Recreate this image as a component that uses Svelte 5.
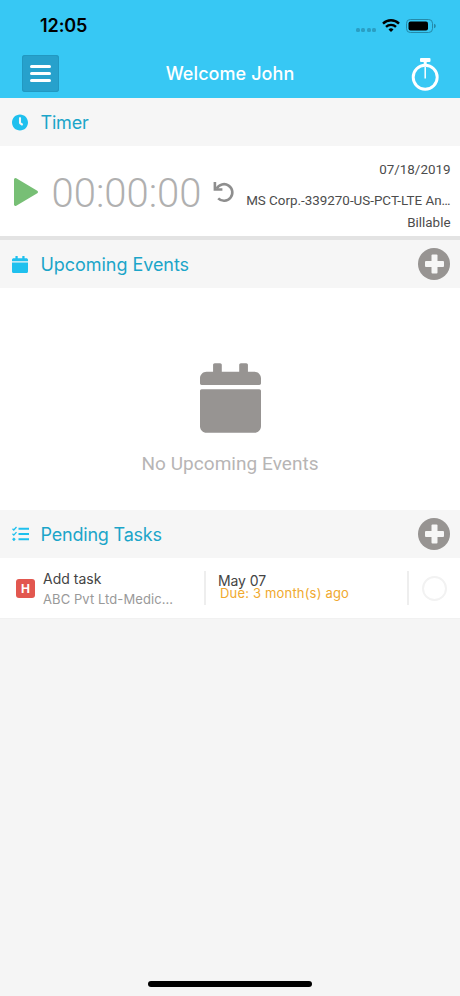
<script>
	let time = "12:05";
	let user = "John";
	let timer = {
		elapsed: "00:00:00",
		date: "07/18/2019",
		matter: "MS Corp.-339270-US-PCT-LTE An…",
		billing: "Billable",
	};
	let tasks = [
		{
			priority: "H",
			title: "Add task",
			client: "ABC Pvt Ltd-Medic...",
			date: "May 07",
			due: "Due: 3 month(s) ago",
			done: false,
		},
	];

	function toggleTask(index) {
		tasks = tasks.map((t, i) => (i === index ? { ...t, done: !t.done } : t));
	}

	const calendarPath =
		"M12 192h424c6.6 0 12 5.4 12 12v260c0 26.5-21.5 48-48 48H48c-26.5 0-48-21.5-48-48V204c0-6.6 5.4-12 12-12zm436-44v-36c0-26.5-21.5-48-48-48h-48V12c0-6.6-5.4-12-12-12h-40c-6.6 0-12 5.4-12 12v52H160V12c0-6.6-5.4-12-12-12h-40c-6.6 0-12 5.4-12 12v52H48C21.5 64 0 85.5 0 112v36c0 6.6 5.4 12 12 12h424c6.6 0 12-5.4 12-12z";
</script>

<div class="screen">
	<header>
		<div class="status-bar">
			<span class="time">{time}</span>
			<div class="status-icons">
				<div class="signal"><i></i><i></i><i></i><i></i></div>
				<svg class="wifi" viewBox="0 0 18 13">
					<path d="M1 4.6a11.4 11.4 0 0 1 16 0" />
					<path d="M4 7.9a7.2 7.2 0 0 1 10 0" />
					<path class="dot" d="M9 13L6.500 10.500a3.700 3.700 0 0 1 5 0z" />
				</svg>
				<svg class="battery" viewBox="0 0 30 14">
					<rect class="shell" x="0.5" y="0.5" width="26" height="13" rx="3.8" />
					<rect x="2.5" y="2.5" width="19.5" height="9" rx="2" />
					<path class="tip" d="M28 4.7q1.8 .6 1.8 2.3t-1.8 2.3z" />
				</svg>
			</div>
		</div>
		<div class="nav-bar">
			<button class="menu" aria-label="Menu"><i></i><i></i><i></i></button>
			<h1>Welcome {user}</h1>
			<button class="stopwatch" aria-label="Timer">
				<svg viewBox="0 0 28 34">
					<rect x="9" y="1" width="10.5" height="4" rx="1" fill="#fff" stroke="none" />
					<path d="M14.2 4v4" stroke-width="3" />
					<circle cx="14.2" cy="20.3" r="12" stroke-width="2.9" />
					<path d="M14.2 10v11.5" stroke-width="1.5" />
				</svg>
			</button>
		</div>
	</header>

	<div class="section-head">
		<svg class="section-icon" viewBox="8 8 496 496">
			<path
				d="M256,8C119,8,8,119,8,256S119,504,256,504,504,393,504,256,393,8,256,8Zm92.49,313h0l-20,25a16,16,0,0,1-22.49,2.5h0l-67-49.72a40,40,0,0,1-15-31.23V112a16,16,0,0,1,16-16h32a16,16,0,0,1,16,16V256l58,42.5A16,16,0,0,1,348.49,321Z"
			/>
		</svg>
		<h2 class="timer-title">Timer</h2>
	</div>
	<div class="timer">
		<button class="play" aria-label="Start timer">
			<svg viewBox="0 0 26 30">
				<path d="M2.5 2.5L23.5 15L2.5 27.5z" />
			</svg>
		</button>
		<span class="elapsed">{timer.elapsed}</span>
		<button class="reset" aria-label="Reset timer">
			<svg viewBox="0 0 22 22">
				<path d="M3.7 7.6A8.3 8.3 0 1 1 5.2 17.4" />
				<path d="M1.9 1v7.5h7.5" />
			</svg>
		</button>
		<div class="timer-info">
			<span class="date">{timer.date}</span>
			<span class="matter">{timer.matter}</span>
			<span class="billing">{timer.billing}</span>
		</div>
	</div>

	<div class="section-head">
		<svg class="section-icon" viewBox="0 0 448 512" preserveAspectRatio="none">
			<path d={calendarPath} />
		</svg>
		<h2 class="events-title">Upcoming Events</h2>
		<button class="add" aria-label="Add event"></button>
	</div>
	<div class="events">
		<svg viewBox="0 0 448 512"><path d={calendarPath} /></svg>
		<p>No Upcoming Events</p>
	</div>

	<div class="section-head">
		<svg class="section-icon checklist" viewBox="0 0 17 16">
			<path d="M6.5 2.7H17M6.5 8H17M6.5 13.3H17" stroke-width="1.9" />
			<path d="M.5 2.7l1.3 1.3L4.5 1M.5 7.8l1.3 1.3L4.5 6.1" stroke-width="1.3" />
			<circle cx="1.9" cy="13.3" r="1.1" />
		</svg>
		<h2 class="tasks-title">Pending Tasks</h2>
		<button class="add" aria-label="Add task"></button>
	</div>
	{#each tasks as task, index}
		<div class="task">
			<span class="priority">{task.priority}</span>
			<div class="task-name">
				<span class="title">{task.title}</span>
				<span class="client">{task.client}</span>
			</div>
			<div class="task-due">
				<span class="day">{task.date}</span>
				<span class="due">{task.due}</span>
			</div>
			<div class="task-check">
				<button
					class:done={task.done}
					aria-label="Complete task"
					on:click={() => toggleTask(index)}
				></button>
			</div>
		</div>
	{/each}

	<div class="home-indicator"></div>
</div>

<style>
	:global(body) {
		margin: 0;
	}
	.screen {
		display: flex;
		flex-direction: column;
		width: 460px;
		height: 996px;
		overflow: hidden;
		background: #f5f5f5;
		font-family: Inter, "Liberation Sans", sans-serif;
	}
	button {
		padding: 0;
		border: none;
		background: none;
		cursor: pointer;
	}
	svg {
		display: block;
	}
	h1,
	h2,
	p {
		margin: 0;
	}
	header {
		height: 98px;
		box-sizing: border-box;
		background: #37c8f4;
	}
	.status-bar {
		display: flex;
		justify-content: space-between;
		align-items: center;
		height: 51px;
		padding: 0 24px 0 40px;
	}
	.time {
		font-size: 18px;
		font-weight: 600;
		letter-spacing: -0.1px;
	}
	.status-icons {
		display: flex;
		align-items: center;
	}
	.signal {
		display: flex;
		gap: 1.5px;
		margin: 9px 6px 0 0;
	}
	.signal i {
		width: 4px;
		height: 4px;
		border-radius: 1.5px;
		background: #2a9fc4;
	}
	.wifi {
		width: 18px;
		height: 13px;
		margin-right: 6px;
		fill: none;
		stroke: #000;
		stroke-width: 2.4;
	}
	.wifi .dot {
		fill: #000;
		stroke: none;
	}
	.battery {
		width: 30px;
		height: 14px;
	}
	.battery .shell {
		fill: none;
		stroke: #2489a8;
	}
	.battery .tip {
		fill: #2489a8;
	}
	.nav-bar {
		display: flex;
		align-items: center;
		justify-content: space-between;
		height: 45px;
		padding: 0 22px;
	}
	.menu {
		display: flex;
		flex-direction: column;
		align-items: center;
		justify-content: center;
		gap: 3.5px;
		width: 37px;
		height: 37px;
		border-radius: 3px;
		background: #27a1cc;
		box-shadow: inset 0 0 0 1px #2298c1;
	}
	.menu i {
		width: 21px;
		height: 3.4px;
		border-radius: 2px;
		background: #fff;
	}
	h1 {
		margin-right: 10px;
		color: #fff;
		font-size: 18px;
		font-weight: 500;
		letter-spacing: 0.08px;
	}
	.stopwatch {
	margin-right: -1px;
	}
	.stopwatch svg {
		width: 28px;
		height: 34px;
		fill: none;
		stroke: #fff;
	}
	.section-head {
		display: flex;
		align-items: center;
		height: 48px;
		padding: 0 10px 0 12px;
		background: #f6f6f6;
	}
	.section-icon {
		width: 16px;
		height: 17px;
		margin-right: 12.5px;
		fill: #1fc0ee;
	}
	.checklist {
		width: 17px;
		height: 16px;
		margin-right: 11.5px;
		stroke: #1fc0ee;
	}
	.checklist path {
		fill: none;
	}
	h2 {
		flex: 1;
		padding-top: 1px;
		color: #1ba5c9;
		font-size: 18px;
		font-weight: 400;
	}
	.timer-title,
	.tasks-title {
		letter-spacing: -0.2px;
	}
	.events-title {
		letter-spacing: -0.05px;
	}
	.add {
		position: relative;
		width: 32px;
		height: 32px;
		border-radius: 50%;
		background: #979492;
	}
	.add::before,
	.add::after {
		content: "";
		position: absolute;
		left: 6.5px;
		top: 13px;
		width: 19px;
		height: 6px;
		border-radius: 1px;
		background: #f6f6f6;
	}
	.add::after {
		transform: rotate(90deg);
	}
	.timer {
		display: flex;
		height: 94px;
		box-sizing: border-box;
		padding: 0 9.5px 0 12.5px;
		border-bottom: 4px solid #e3e3e3;
		background: #fff;
	}
	.play {
		align-self: flex-start;
		margin-top: 31px;
	}
	.play svg {
		width: 26px;
		height: 30px;
		fill: #77bf75;
		stroke: #77bf75;
		stroke-width: 3;
		stroke-linejoin: round;
	}
	.elapsed {
		width: 162px;
		padding: 1px 0 0 13px;
		box-sizing: border-box;
		color: #b0b0b0;
		font-family: Roboto, sans-serif;
		font-size: 40px;
		font-weight: 300;
		line-height: 94px;
		white-space: nowrap;
	}
	.reset {
		align-self: flex-start;
		margin-top: 35px;
	}
	.reset svg {
		width: 22px;
		height: 22px;
		margin-left: 12px;
		fill: none;
		stroke: #8e8e8e;
		stroke-width: 2.6;
	}
	.timer-info {
		display: flex;
		flex: 1;
		flex-direction: column;
		align-items: flex-end;
		color: #4c4c4c;
		font-family: Roboto, sans-serif;
		font-size: 13.4px;
		line-height: 22px;
		white-space: nowrap;
	}
	.date {
		margin: 13px 0 9px;
	}
	.events {
		display: flex;
		flex-direction: column;
		align-items: center;
		height: 222px;
		box-sizing: border-box;
		padding-top: 75px;
		background: #fff;
	}
	.events svg {
		width: 61px;
		height: 70px;
		fill: #979492;
	}
	.events p {
		margin-top: 19px;
		color: #b7b5b5;
		font-family: Roboto, sans-serif;
		font-size: 19px;
		line-height: 24px;
		letter-spacing: 0.05px;
	}
	.task {
		display: flex;
		align-items: center;
		height: 60px;
		padding-left: 16px;
		background: #fff;
		border-bottom: 1px solid #f1f1f1;
	}
	.priority {
		width: 19px;
		margin: 1px 8px 0 0;
		border-radius: 3px;
		background: #e2574f;
		color: #fff;
		font-size: 12px;
		font-weight: 700;
		line-height: 19px;
		text-align: center;
	}
	.task-name,
	.task-due {
		display: flex;
		flex-direction: column;
		white-space: nowrap;
	}
	.task-name {
		width: 161px;
		padding-top: 2px;
	}
	.title {
		color: #444;
		font-size: 14px;
		line-height: 20px;
	}
	.client {
		color: #999;
		font-size: 13px;
		line-height: 20px;
		letter-spacing: 0.08px;
	}
	.task-due {
		width: 203px;
		height: 34px;
		box-sizing: border-box;
		padding: 3px 0 0 12px;
		border-left: 2px solid #eee;
	}
	.day {
		color: #444;
		font-size: 14px;
		line-height: 13px;
		letter-spacing: -0.1px;
	}
	.due {
		margin-left: 2px;
		color: #f0a92e;
		font-size: 13px;
		line-height: 12px;
		letter-spacing: 0.18px;
	}
	.task-check {
		display: flex;
		align-items: center;
		height: 34px;
		padding-left: 13px;
		border-left: 2px solid #eee;
	}
	.task-check button {
		width: 25px;
		height: 25px;
		border: 2px solid #f2f2f2;
		border-radius: 50%;
	}
	.task-check .done {
		background: #77bf75;
	}
	.home-indicator {
		width: 164px;
		height: 6px;
		margin: auto auto 9px;
		border-radius: 3px;
		background: #000;
	}
</style>
